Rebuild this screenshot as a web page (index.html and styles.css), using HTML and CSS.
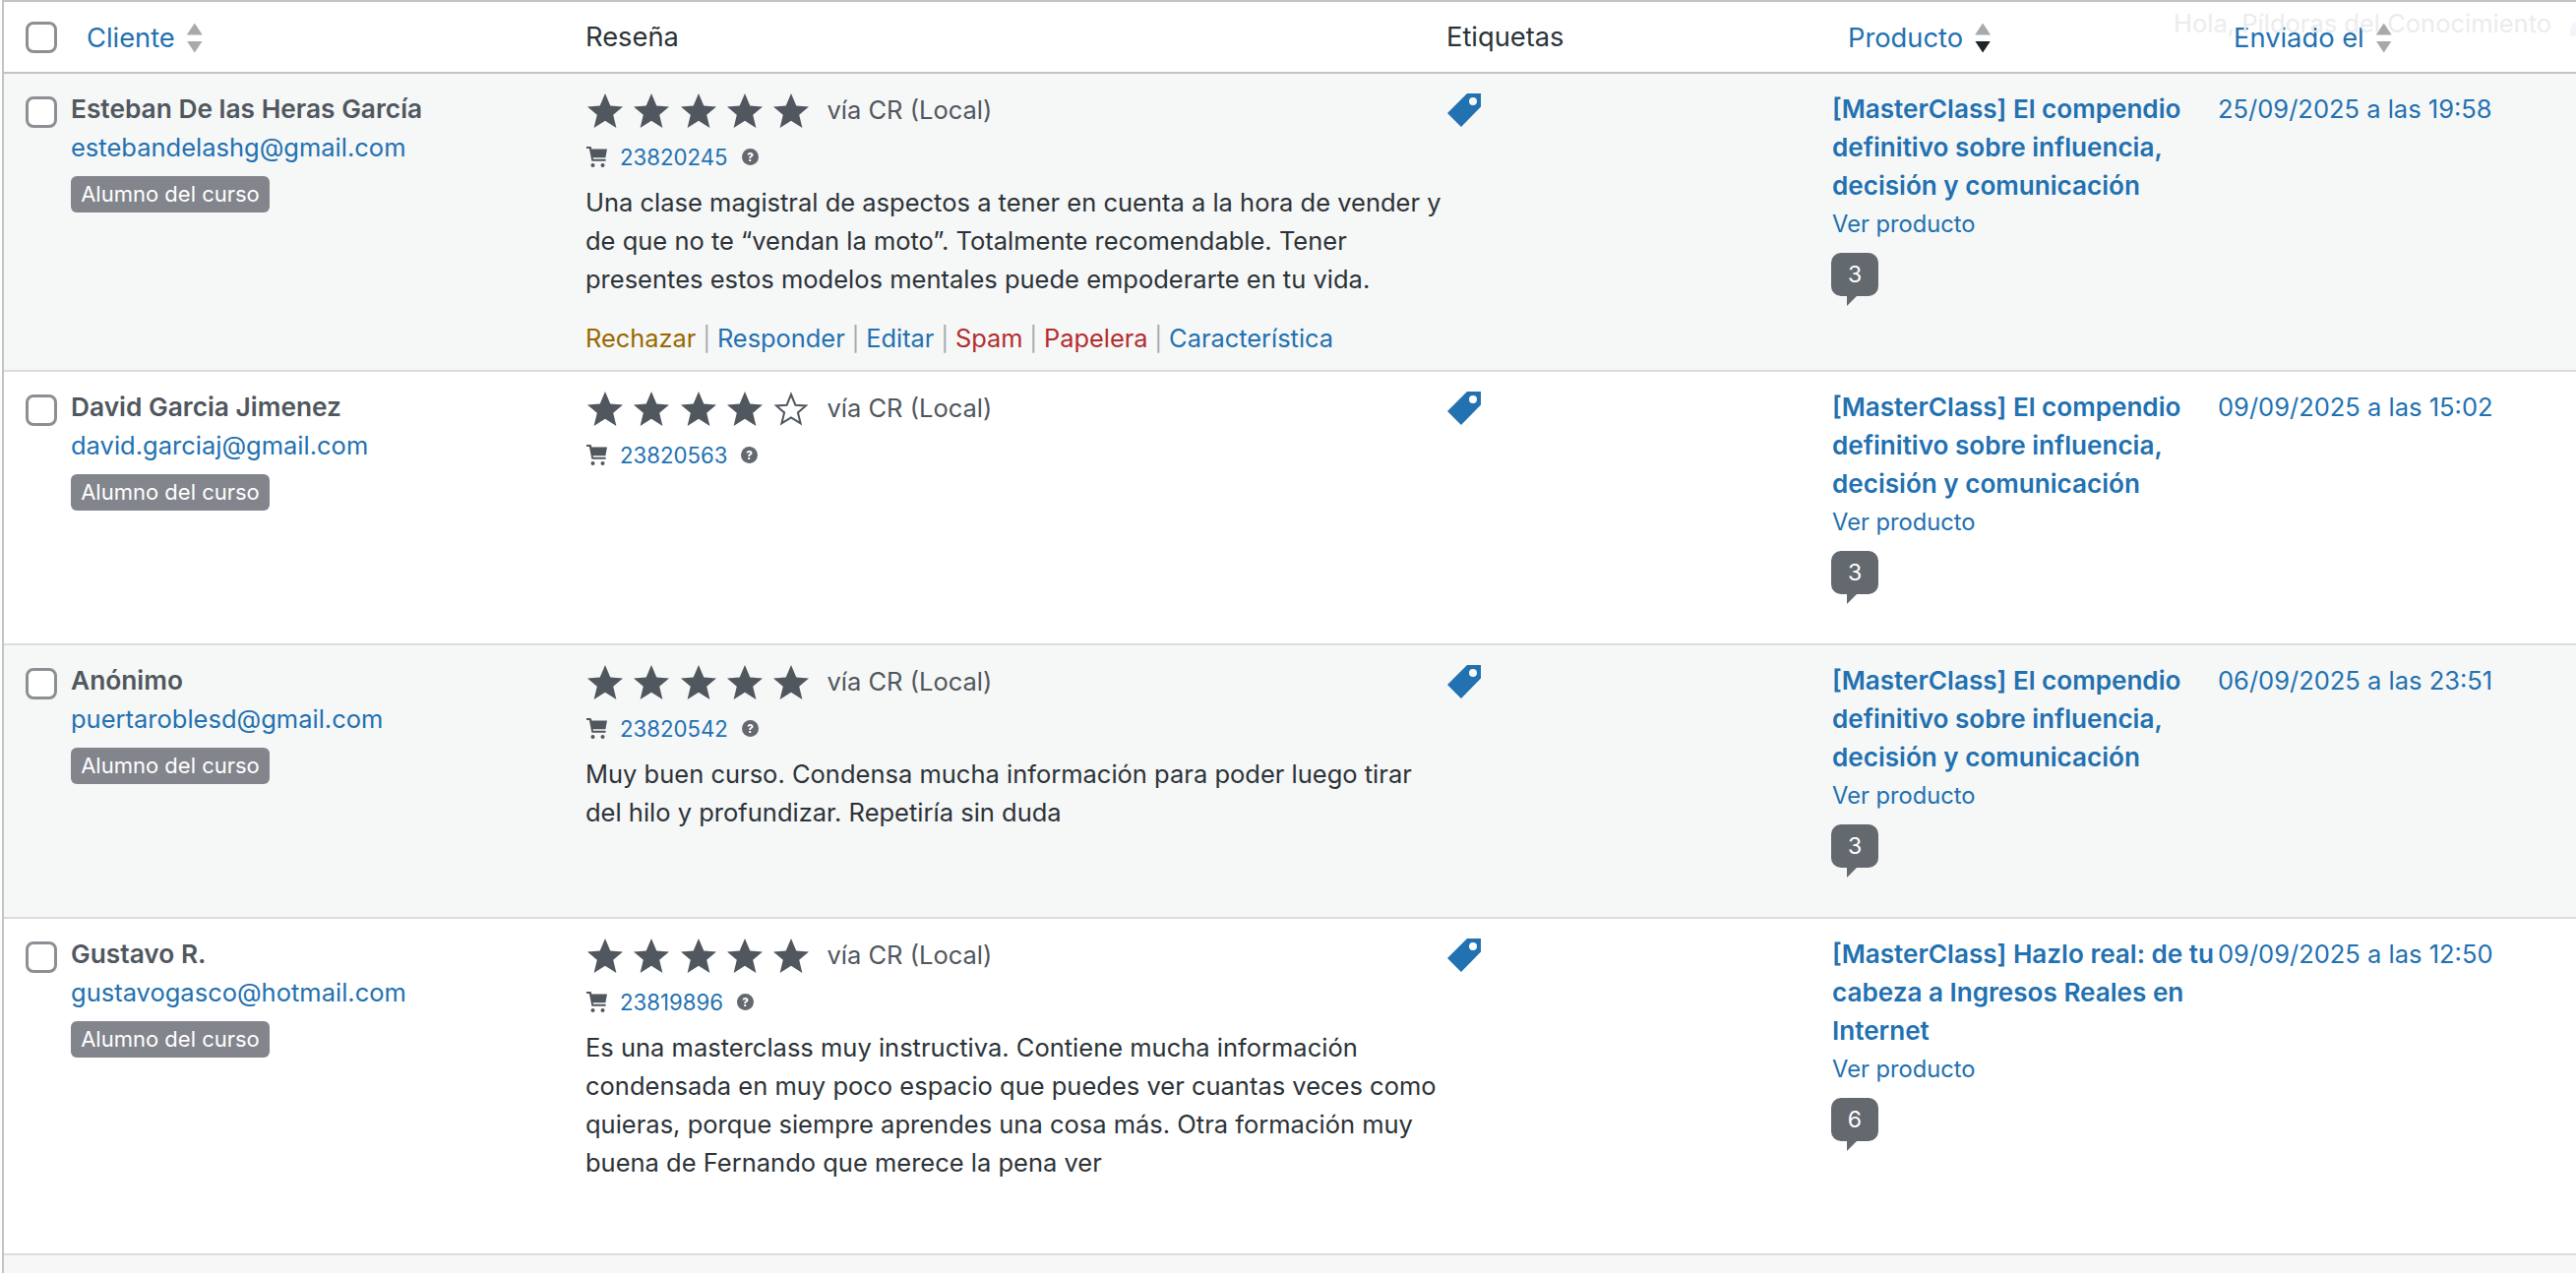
FILE: index.html
```html
<!DOCTYPE html>
<html lang="es">

<head>
    <meta charset="UTF-8">
    <title>Reseñas</title>
    <link rel="stylesheet" href="styles.css">
</head>

<body>
    <svg class="sprite" xmlns="http://www.w3.org/2000/svg">
        <symbol id="star" viewBox="0 0 36 35">
            <polygon points="18,0 23.300,12.600 36,13.400 26.200,21.800 29.400,35 18,27.800 6.600,35 9.800,21.800 0,13.400 12.700,12.600" />
        </symbol>
        <symbol id="star-empty" viewBox="0 0 36 35">
            <polygon points="18,3 22.400,13.700 33,14.400 24.900,21.400 27.600,32.400 18,26.400 8.400,32.400 11.100,21.400 3,14.400 13.600,13.700" fill="none" stroke="#50575e" stroke-width="2" />
        </symbol>
        <symbol id="cart" viewBox="0 0 21 21">
            <path d="M0 0h4.600l.8 2.600H21l-1.600 8.600H6.600l.4 1.600h12.600v2H5.400L2.900 2H0z" />
            <circle cx="6.500" cy="19" r="2" />
            <circle cx="16.500" cy="19" r="2" />
        </symbol>
        <symbol id="help" viewBox="0 0 17 17">
            <circle cx="8.500" cy="8.500" r="8.500" fill="#646970" />
            <path d="M5.600 6.600C5.700 4.800 6.900 4 8.600 4c1.700 0 2.900 1 2.900 2.400 0 1.100-.6 1.700-1.400 2.200-.7.4-.9.7-.9 1.400H7.300c0-1.200.3-1.800 1.200-2.400.6-.4.9-.7.9-1.100 0-.5-.4-.8-.9-.8-.6 0-1 .3-1 .9zM7.200 11h2v2h-2z" fill="#fff" />
        </symbol>
        <symbol id="tag" viewBox="0 0 34 34">
            <path fill-rule="evenodd" d="M20 0h14v13.500L14 34 0 20zM26 4a4 4 0 1 0 0 8 4 4 0 0 0 0-8z" />
        </symbol>
    </svg>

    <div class="greeting">Hola, Píldoras del Conocimiento</div>
    <div class="avatar-edge"></div>

    <div class="wrap">
        <table class="reviews">
            <thead>
                <tr>
                    <th class="col-check"><span class="checkbox"></span></th>
                    <th class="col-client sortable"><a href="#">Cliente</a><span class="sort"><i class="up"></i><i class="down"></i></span></th>
                    <th class="col-review">Reseña</th>
                    <th class="col-tags">Etiquetas</th>
                    <th class="col-product sortable"><a href="#">Producto</a><span class="sort"><i class="up"></i><i class="down active"></i></span></th>
                    <th class="col-date sortable"><a href="#">Enviado el</a><span class="sort"><i class="up"></i><i class="down"></i></span></th>
                </tr>
            </thead>
            <tbody>
                <tr class="alt">
                    <td class="cell-check"><span class="checkbox"></span></td>
                    <td>
                        <div class="name">Esteban De las Heras García</div>
                        <a href="#">estebandelashg@gmail.com</a>
                        <div class="badge">Alumno del curso</div>
                    </td>
                    <td class="cell-review">
                        <div class="rating">
                            <svg class="star"><use href="#star" /></svg>
                            <svg class="star"><use href="#star" /></svg>
                            <svg class="star"><use href="#star" /></svg>
                            <svg class="star"><use href="#star" /></svg>
                            <svg class="star"><use href="#star" /></svg>
                            <span class="via">vía CR (Local)</span>
                        </div>
                        <div class="order">
                            <svg class="cart"><use href="#cart" /></svg>
                            <a href="#">23820245</a>
                            <svg class="help"><use href="#help" /></svg>
                        </div>
                        <p>Una clase magistral de aspectos a tener en cuenta a la hora de vender y de que no te “vendan la moto”. Totalmente recomendable. Tener presentes estos modelos mentales puede empoderarte en tu vida.</p>
                        <div class="actions">
                            <a class="warn" href="#">Rechazar</a><span class="sep"> | </span><a href="#">Responder</a><span class="sep"> | </span><a href="#">Editar</a><span class="sep"> | </span><a class="danger" href="#">Spam</a><span class="sep"> | </span><a class="danger" href="#">Papelera</a><span class="sep"> | </span><a href="#">Característica</a>
                        </div>
                    </td>
                    <td><svg class="tag"><use href="#tag" /></svg></td>
                    <td>
                        <a class="product" href="#">[MasterClass] El compendio definitivo sobre influencia, decisión y comunicación</a>
                        <a class="view" href="#">Ver producto</a>
                        <span class="bubble">3</span>
                    </td>
                    <td><a href="#">25/09/2025 a las 19:58</a></td>
                </tr>
                <tr>
                    <td class="cell-check"><span class="checkbox"></span></td>
                    <td>
                        <div class="name">David Garcia Jimenez</div>
                        <a href="#">david.garciaj@gmail.com</a>
                        <div class="badge">Alumno del curso</div>
                    </td>
                    <td class="cell-review">
                        <div class="rating">
                            <svg class="star"><use href="#star" /></svg>
                            <svg class="star"><use href="#star" /></svg>
                            <svg class="star"><use href="#star" /></svg>
                            <svg class="star"><use href="#star" /></svg>
                            <svg class="star"><use href="#star-empty" /></svg>
                            <span class="via">vía CR (Local)</span>
                        </div>
                        <div class="order">
                            <svg class="cart"><use href="#cart" /></svg>
                            <a href="#">23820563</a>
                            <svg class="help"><use href="#help" /></svg>
                        </div>
                    </td>
                    <td><svg class="tag"><use href="#tag" /></svg></td>
                    <td>
                        <a class="product" href="#">[MasterClass] El compendio definitivo sobre influencia, decisión y comunicación</a>
                        <a class="view" href="#">Ver producto</a>
                        <span class="bubble">3</span>
                    </td>
                    <td><a href="#">09/09/2025 a las 15:02</a></td>
                </tr>
                <tr class="alt">
                    <td class="cell-check"><span class="checkbox"></span></td>
                    <td>
                        <div class="name">Anónimo</div>
                        <a href="#">puertaroblesd@gmail.com</a>
                        <div class="badge">Alumno del curso</div>
                    </td>
                    <td class="cell-review">
                        <div class="rating">
                            <svg class="star"><use href="#star" /></svg>
                            <svg class="star"><use href="#star" /></svg>
                            <svg class="star"><use href="#star" /></svg>
                            <svg class="star"><use href="#star" /></svg>
                            <svg class="star"><use href="#star" /></svg>
                            <span class="via">vía CR (Local)</span>
                        </div>
                        <div class="order">
                            <svg class="cart"><use href="#cart" /></svg>
                            <a href="#">23820542</a>
                            <svg class="help"><use href="#help" /></svg>
                        </div>
                        <p>Muy buen curso. Condensa mucha información para poder luego tirar del hilo y profundizar. Repetiría sin duda</p>
                    </td>
                    <td><svg class="tag"><use href="#tag" /></svg></td>
                    <td>
                        <a class="product" href="#">[MasterClass] El compendio definitivo sobre influencia, decisión y comunicación</a>
                        <a class="view" href="#">Ver producto</a>
                        <span class="bubble">3</span>
                    </td>
                    <td><a href="#">06/09/2025 a las 23:51</a></td>
                </tr>
                <tr>
                    <td class="cell-check"><span class="checkbox"></span></td>
                    <td>
                        <div class="name">Gustavo R.</div>
                        <a href="#">gustavogasco@hotmail.com</a>
                        <div class="badge">Alumno del curso</div>
                    </td>
                    <td class="cell-review">
                        <div class="rating">
                            <svg class="star"><use href="#star" /></svg>
                            <svg class="star"><use href="#star" /></svg>
                            <svg class="star"><use href="#star" /></svg>
                            <svg class="star"><use href="#star" /></svg>
                            <svg class="star"><use href="#star" /></svg>
                            <span class="via">vía CR (Local)</span>
                        </div>
                        <div class="order">
                            <svg class="cart"><use href="#cart" /></svg>
                            <a href="#">23819896</a>
                            <svg class="help"><use href="#help" /></svg>
                        </div>
                        <p>Es una masterclass muy instructiva. Contiene mucha información condensada en muy poco espacio que puedes ver cuantas veces como quieras, porque siempre aprendes una cosa más. Otra formación muy buena de Fernando que merece la pena ver</p>
                        <div class="actions hidden">Rechazar</div>
                    </td>
                    <td><svg class="tag"><use href="#tag" /></svg></td>
                    <td>
                        <a class="product" href="#">[MasterClass] Hazlo real: de tu cabeza a Ingresos Reales en Internet</a>
                        <a class="view" href="#">Ver producto</a>
                        <span class="bubble">6</span>
                    </td>
                    <td><a href="#">09/09/2025 a las 12:50</a></td>
                </tr>
            </tbody>
        </table>
        <div class="table-end"></div>
    </div>
</body>

</html>
```

FILE: styles.css
```css
* {
    box-sizing: border-box;
}

html,
body {
    margin: 0;
    padding: 0;
    background-color: #fff;
}

body {
    position: relative;
    height: 1294px;
    overflow: hidden;
    font-family: Inter, "Liberation Sans", sans-serif;
    font-size: 25.5px;
    line-height: 39px;
    color: #2c3338;
}

a {
    color: #2271b1;
    text-decoration: none;
}

p {
    margin: 12px 0 0;
}

.sprite {
    display: none;
}

.wrap {
    margin-left: 2px;
    border-top: 2px solid #c3c4c7;
    border-left: 2px solid #c3c4c7;
}

.greeting {
    position: absolute;
    top: 4px;
    left: 2209px;
    color: #ebecee;
    white-space: nowrap;
    z-index: 2;
}

.avatar-edge {
    position: absolute;
    top: 22px;
    left: 2612px;
    width: 16px;
    height: 15px;
    background-color: #f3f5fb;
    border-radius: 8px 0 0 0;
}

.reviews {
    width: 100%;
    table-layout: fixed;
    border-collapse: separate;
    border-spacing: 0;
}

.reviews th {
    height: 73px;
    padding: 0;
    font-size: 27.3px;
    font-weight: 400;
    text-align: left;
    vertical-align: middle;
    border-bottom: 2px solid #c3c4c7;
}

.reviews th.sortable {
    padding-left: 16px;
}

.reviews th.sortable a {
    vertical-align: middle;
}

.reviews td {
    padding: 16px 0 40px;
    vertical-align: top;
    border-bottom: 2px solid #dcdcde;
}

.reviews .alt td {
    background-color: #f6f7f7;
}

.col-check {
    width: 68px;
}

.col-client {
    width: 523px;
}

.col-review {
    width: 875px;
}

.col-tags {
    width: 392px;
}

.col-product {
    width: 392px;
}

.checkbox {
    display: block;
    width: 32px;
    height: 32px;
    margin-left: 22px;
    background-color: #fff;
    border: 3px solid #8c8f94;
    border-radius: 8px;
}

.reviews td.cell-check {
    padding-top: 23px;
}

.sort {
    display: inline-flex;
    flex-direction: column;
    gap: 6px;
    margin-left: 12px;
    vertical-align: middle;
}

.sort i {
    display: block;
    width: 16px;
    height: 12px;
    background-color: #a7aaad;
}

.sort .up {
    clip-path: polygon(50% 0, 100% 100%, 0 100%);
}

.sort .down {
    clip-path: polygon(0 0, 100% 0, 50% 100%);
}

.sort .active {
    background-color: #1d2327;
}

.name {
    font-size: 26.3px;
    font-weight: 600;
    color: #50575e;
}

.badge {
    width: 202px;
    height: 37px;
    margin-top: 10px;
    font-size: 22px;
    line-height: 37px;
    text-align: center;
    color: #fff;
    background-color: #82858c;
    border-radius: 6px;
}

.reviews td.cell-review {
    padding: 19px 0 13px;
}

.rating {
    display: flex;
    align-items: center;
    gap: 11.3px;
    height: 36px;
    padding-left: 2px;
}

.star {
    width: 36px;
    height: 35px;
    fill: #50575e;
}

.via {
    margin: 0 0 2px 7px;
    color: #50575e;
}

.order {
    display: flex;
    align-items: center;
    height: 30px;
    margin-top: 14px;
    font-size: 22.2px;
}

.cart {
    width: 21px;
    height: 21px;
    margin: 0 13px 0 1px;
    fill: #50575e;
}

.help {
    width: 17px;
    height: 17px;
    margin-left: 14px;
}

.actions {
    margin-top: 21px;
    font-size: 25.4px;
    white-space: nowrap;
}

.actions.hidden {
    visibility: hidden;
}

.actions .warn {
    color: #996800;
}

.actions .danger {
    color: #b32d2e;
}

.sep {
    font-size: 24px;
    line-height: 1;
    color: #a7aaad;
}

.tag {
    display: block;
    width: 34px;
    height: 34px;
    margin: 4px 0 0 1px;
    fill: #2271b1;
}

.product {
    display: block;
    font-size: 26.1px;
    font-weight: 600;
}

.view {
    display: block;
    font-size: 23.7px;
}

.bubble {
    position: relative;
    display: block;
    width: 48px;
    height: 44px;
    margin: 10px 0 10px -1px;
    line-height: 44px;
    font-size: 23px;
    text-align: center;
    color: #fff;
    background-color: #646970;
    border-radius: 10px;
}

.bubble::after {
    content: "";
    position: absolute;
    top: 44px;
    left: 16px;
    width: 10px;
    height: 10px;
    background-color: #646970;
    clip-path: polygon(0 0, 100% 0, 0 100%);
}

.table-end {
    height: 18px;
    background-color: #f6f7f7;
}
```
